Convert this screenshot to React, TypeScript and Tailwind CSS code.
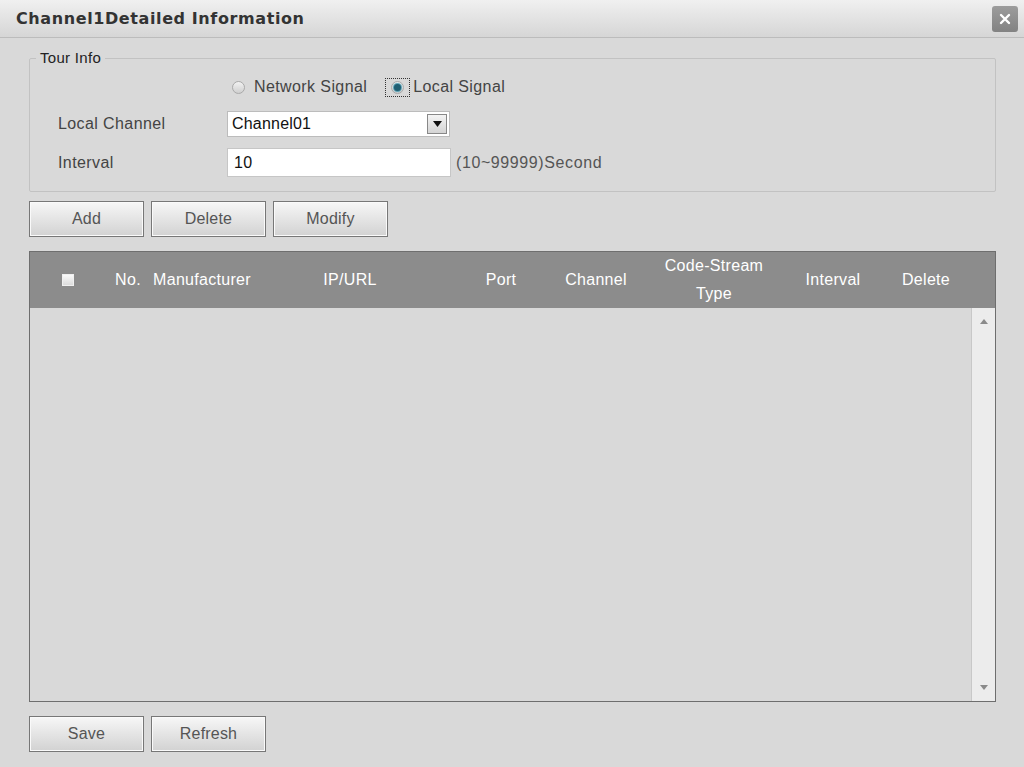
const Btn = ({ label }: { label: string }) => (
  <button className="w-[115px] h-[36px] border border-[#777] bg-gradient-to-b from-[#f7f7f7] to-[#d2d2d2] text-[16px] tracking-[0.2px] text-[#555] shadow-[inset_0_0_0_1px_#fafafa]">
    {label}
  </button>
);

const Radio = ({ checked }: { checked?: boolean }) => (
  <span className="w-[13px] h-[13px] rounded-full border border-[#a9a9a9] bg-gradient-to-b from-[#f2f2f2] to-[#cfcfcf] flex items-center justify-center">
    {checked && <span className="w-[7px] h-[7px] rounded-full bg-[#1f5f73] shadow-[0_0_1px_1px_#4d9bb0]" />}
  </span>
);

const cols = [
  { w: 'w-[44px]', t: 'No.' },
  { w: 'w-[104px]', t: 'Manufacturer' },
  { w: 'w-[192px]', t: 'IP/URL' },
  { w: 'w-[110px]', t: 'Port' },
  { w: 'w-[80px]', t: 'Channel' },
  { w: 'w-[156px]', t: 'Code-Stream Type' },
  { w: 'w-[82px]', t: 'Interval' },
  { w: 'w-[104px]', t: 'Delete' },
];

export default function App() {
  return (
    <div className="w-[1024px] h-[767px] bg-[#d9d9d9] font-['Liberation_Sans',Arial,sans-serif] text-[#333] overflow-hidden">
      <div className="h-[38px] flex items-center justify-between pl-[16px] pr-[6px] bg-gradient-to-b from-[#f0f0f0] to-[#d6d6d6] border-b border-[#bcbcbc]">
        <span className="font-['DejaVu_Sans',sans-serif] text-[16px] font-bold text-[#333] tracking-[0.6px]">Channel1Detailed Information</span>
        <span className="w-[26px] h-[26px] rounded-[3px] bg-gradient-to-b from-[#9c9c9c] to-[#828282] flex items-center justify-center">
          <svg width="14" height="14" viewBox="0 0 14 14">
            <path d="M3 3 L11 11 M11 3 L3 11" stroke="#fff" strokeWidth="2.4" strokeLinecap="round" />
          </svg>
        </span>
      </div>

      <div className="px-[29px] pt-[11px]">
        <fieldset className="border border-[#c2c2c2] rounded-[2px] pl-[28px] pr-[10px] pb-[14px] w-[967px]">
          <legend className="text-[15px] tracking-[0.3px] text-[#222] px-[4px] ml-[-22px] leading-[18px]">Tour Info</legend>
          <div className="flex items-center h-[22px] mt-[9px] pl-[174px] text-[16px] tracking-[0.4px] text-[#444]">
            <Radio />
            <span className="ml-[9px]">Network Signal</span>
            <span className="ml-[18px] mr-[3px] border border-dotted border-[#333] px-[5px] py-[2px] flex">
              <Radio checked />
            </span>
            <span>Local Signal</span>
          </div>
          <div className="flex items-center mt-[13px] text-[16px] tracking-[0.4px] text-[#444]">
            <span className="w-[169px]">Local Channel</span>
            <div className="w-[223px] h-[26px] bg-white border border-[#bcbcbc] flex items-center justify-between pl-[4px] pr-[2px]">
              <span className="text-[16px] tracking-[0.2px] text-[#111]">Channel01</span>
              <span className="w-[20px] h-[20px] border border-[#888] bg-gradient-to-b from-[#f4f4f4] to-[#d4d4d4] flex items-center justify-center">
                <svg width="9" height="6" viewBox="0 0 9 6"><path d="M0 0 H9 L4.5 6 Z" fill="#111" /></svg>
              </span>
            </div>
          </div>
          <div className="flex items-center mt-[11px] text-[16px] tracking-[0.4px] text-[#444]">
            <span className="w-[169px]">Interval</span>
            <div className="w-[224px] h-[29px] bg-white border border-[#c6c6c6] flex items-center pl-[6px]">
              <span className="text-[16px] text-[#111]">10</span>
            </div>
            <span className="ml-[5px] text-[#555] tracking-[0.6px]">(10~99999)Second</span>
          </div>
        </fieldset>

        <div className="flex gap-[7px] mt-[9px]">
          <Btn label="Add" />
          <Btn label="Delete" />
          <Btn label="Modify" />
        </div>

        <div className="mt-[14px] w-[967px] h-[451px] border border-[#6e6e6e] flex flex-col">
          <div className="h-[56px] bg-[#8c8c8c] flex items-center text-white text-[16px] tracking-[0.3px] shrink-0">
            <div className="w-[76px] flex justify-center">
              <span className="w-[12px] h-[12px] bg-gradient-to-b from-[#fafafa] to-[#dcdcdc] border border-[#f0f0f0]" />
            </div>
            {cols.map((c) => (
              <div key={c.t} className={`${c.w} text-center leading-[28px] whitespace-nowrap`}>
                {c.t === 'Code-Stream Type' ? (
                  <>
                    Code-Stream
                    <br />
                    Type
                  </>
                ) : (
                  c.t
                )}
              </div>
            ))}
          </div>
          <div className="flex-1 flex justify-end">
            <div className="w-[24px] bg-[#ececec] border-l border-[#c8c8c8] flex flex-col items-center justify-between py-[11px]">
              <svg width="8" height="5" viewBox="0 0 8 5"><path d="M0 5 L4 0 L8 5 Z" fill="#8a8a8a" /></svg>
              <svg width="8" height="5" viewBox="0 0 8 5"><path d="M0 0 L8 0 L4 5 Z" fill="#8a8a8a" /></svg>
            </div>
          </div>
        </div>

        <div className="flex gap-[7px] mt-[14px]">
          <Btn label="Save" />
          <Btn label="Refresh" />
        </div>
      </div>
    </div>
  );
}
